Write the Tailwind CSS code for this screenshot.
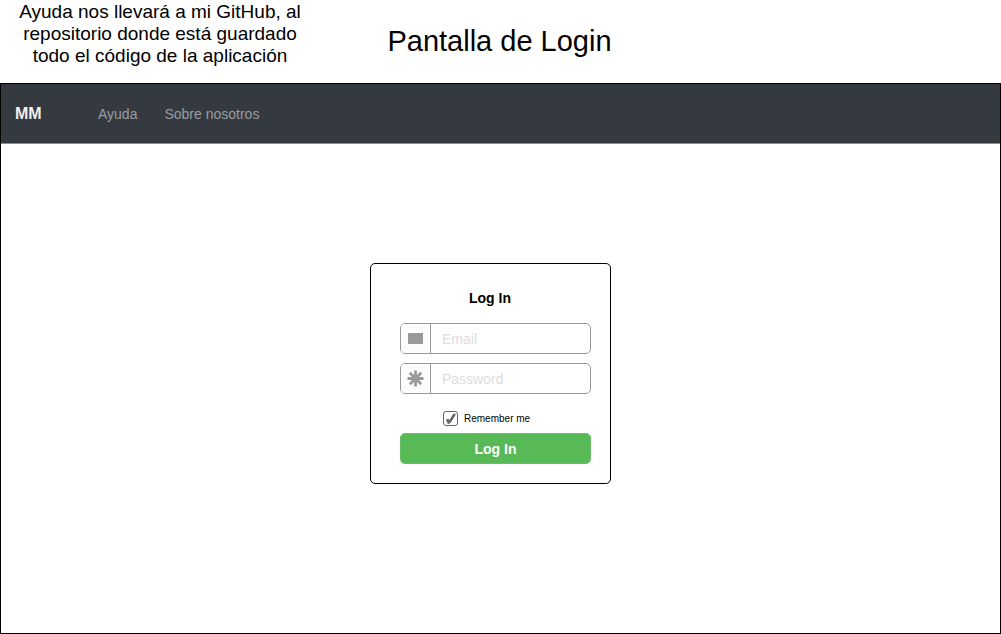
<!DOCTYPE html>
<html lang="es">
<head>
<meta charset="utf-8">
<meta name="viewport" content="width=device-width, initial-scale=1">
<title>Pantalla de Login</title>
<script src="https://cdn.jsdelivr.net/npm/@tailwindcss/browser@4"></script>
</head>
<body class="flex min-h-screen flex-col bg-white font-['Liberation_Sans',Arial,sans-serif] text-black">
  <header class="grid grid-cols-[320px_1fr_322px] pb-4">
    <p class="px-2 pt-px text-center text-[19px] leading-[22px]">Ayuda nos llevará a mi GitHub, al repositorio donde está guardado todo el código de la aplicación</p>
    <h1 class="self-center pt-[14px] text-center text-[29px] leading-[34px]">Pantalla de Login</h1>
  </header>
  <div class="flex grow flex-col border border-black">
    <nav class="flex h-[60px] items-center border-b border-[#868b90] bg-[#343a40] px-[14px] text-sm text-[#9a9da0]" aria-label="Principal">
      <a href="#" class="w-[83px] text-base font-bold text-[#f0f0f0]">MM</a>
      <div class="flex gap-[27px] pt-px">
        <a href="#ayuda">Ayuda</a>
        <a href="#nosotros">Sobre nosotros</a>
      </div>
    </nav>
    <main class="flex items-start justify-center pt-[119px] pr-5">
      <form class="w-[241px] rounded-[5px] border border-black pt-[26px] pr-[19px] pb-[19px] pl-[29px] text-sm">
        <h2 class="mr-[11px] text-center text-sm leading-4 font-bold">Log In</h2>
        <div class="mt-[17px] flex h-[31px] overflow-hidden rounded-[5px] border border-[#999]">
          <label for="email" class="flex w-[30px] items-center justify-center border-r border-[#999] bg-[#fcfcfc]" aria-label="Email">
            <svg class="h-[11px] w-[15px]" viewBox="0 0 15 11"><path fill="#999" d="M0 0h15v11H0z"/></svg>
          </label>
          <input id="email" type="email" placeholder="Email" class="min-w-0 flex-1 px-[11px] pt-px outline-none placeholder:text-[#ddd]">
        </div>
        <div class="mt-[9px] flex h-[31px] overflow-hidden rounded-[5px] border border-[#999]">
          <label for="password" class="flex w-[30px] items-center justify-center border-r border-[#999] bg-[#fcfcfc]" aria-label="Password">
            <svg class="size-[17px]" viewBox="0 0 17 17" fill="none" stroke="#999" stroke-width="2.800"><path d="M8.500 0.500v16M0.500 8.500h16M2.800 2.800l11.400 11.400M14.200 2.800l-11.400 11.400"/></svg>
          </label>
          <input id="password" type="password" placeholder="Password" class="min-w-0 flex-1 px-[11px] pt-px outline-none placeholder:text-[#ddd]">
        </div>
        <div class="mt-[17px] flex h-[15px] items-center pl-[43px]">
          <span class="relative size-[15px]">
            <input id="remember" type="checkbox" checked class="block size-[15px] appearance-none rounded-[3px] border border-[#666] bg-white">
            <svg class="pointer-events-none absolute inset-0 hidden size-[15px] [input:checked+&]:block" viewBox="0 0 15 15"><path fill="#666" d="M2.800 8.800l2.400-1 1.200 1.200L10.200 2.800h2.500l-.4 1.700L7.500 12l-2.500 1.300z"/></svg>
          </span>
          <label for="remember" class="pl-[6px] text-[10px] leading-[15px]">Remember me</label>
        </div>
        <button type="submit" class="mt-[7px] h-[31px] w-full rounded-[5px] border border-[#68c066] bg-[#58b957] pt-px text-sm font-bold text-white">Log In</button>
      </form>
    </main>
  </div>
</body>
</html>
